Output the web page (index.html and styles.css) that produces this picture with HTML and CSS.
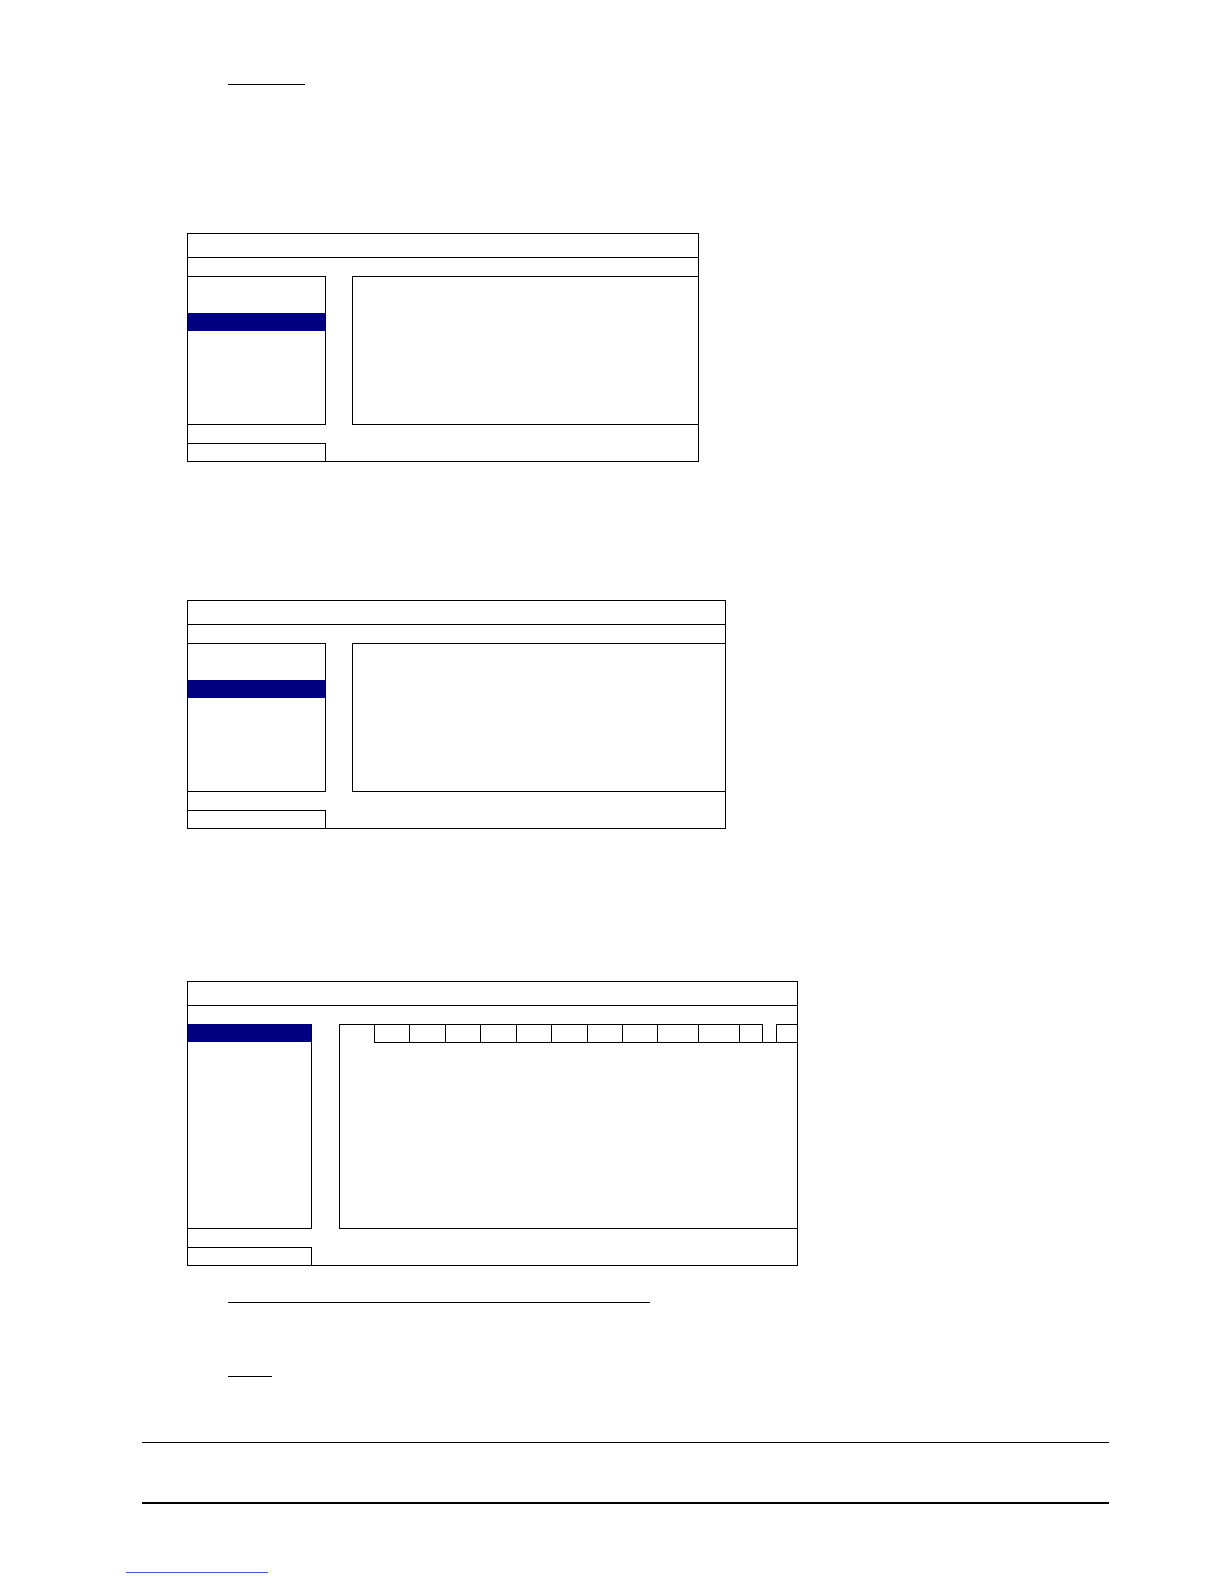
FILE: index.html
```html
<!DOCTYPE html>
<html lang="en">
<head>
<meta charset="utf-8">
<title>Menu layout</title>
<link rel="stylesheet" href="styles.css">
</head>
<body>
<div class="page">
  <div class="rule-short rule-a"></div>

  <div class="osd osd-1">
    <div class="osd-title"></div>
    <div class="osd-body">
      <div class="menu">
        <div class="menu-item sel sel-mid"></div>
      </div>
      <div class="gap"></div>
      <div class="content"></div>
    </div>
    <div class="osd-foot"><div class="foot-box"></div></div>
  </div>

  <div class="osd osd-2">
    <div class="osd-title"></div>
    <div class="osd-body">
      <div class="menu">
        <div class="menu-item sel sel-mid"></div>
      </div>
      <div class="gap"></div>
      <div class="content"></div>
    </div>
    <div class="osd-foot"><div class="foot-box"></div></div>
  </div>

  <div class="osd osd-3">
    <div class="osd-title"></div>
    <div class="osd-body tall">
      <div class="menu narrow">
        <div class="menu-item sel sel-top"></div>
      </div>
      <div class="gap wide"></div>
      <div class="content tabbed">
        <div class="tabs">
          <div class="tab corner"></div>
          <div class="tab w35"></div>
          <div class="tab w36"></div>
          <div class="tab w35"></div>
          <div class="tab w36"></div>
          <div class="tab w35"></div>
          <div class="tab w36"></div>
          <div class="tab w35"></div>
          <div class="tab w35"></div>
          <div class="tab w41"></div>
          <div class="tab w41"></div>
          <div class="tab w24 closed"></div>
          <div class="tab spacer"></div>
          <div class="tab w21"></div>
        </div>
      </div>
    </div>
    <div class="osd-foot"><div class="foot-box narrow"></div></div>
  </div>

  <div class="rule-short rule-b"></div>
  <div class="rule-short rule-c"></div>
  <div class="rule-full rule-d"></div>
  <div class="rule-full thick rule-e"></div>
  <div class="rule-link"></div>
</div>
</body>
</html>
```

FILE: styles.css
```css
* { box-sizing: border-box; }

html, body {
  margin: 0;
  padding: 0;
  background: #ffffff;
  font-family: "Liberation Serif", "Times New Roman", serif;
}

.page {
  width: 1224px;
  min-height: 1584px;
  display: flex;
  flex-direction: column;
  align-items: flex-start;
}

/* short underlines */
.rule-short {
  height: 1px;
  background: #000;
  margin-left: 228px;
}
.rule-a { margin-top: 84px; width: 77px; }
.rule-b { margin-top: 36px; width: 422px; }
.rule-c { margin-top: 73px; width: 44px; }

/* full-width rules */
.rule-full {
  margin-left: 142px;
  width: 967px;
  height: 1px;
  background: #000;
}
.rule-d { margin-top: 65px; }
.rule-e { margin-top: 59px; height: 2px; }

.rule-link {
  margin-top: 68px;
  margin-left: 126px;
  width: 142px;
  height: 1px;
  background: #3a5bd9;
}

/* OSD menu boxes */
.osd {
  margin-left: 187px;
  border: 1px solid #000;
  display: flex;
  flex-direction: column;
}
.osd-1 { margin-top: 148px; width: 512px; }
.osd-2 { margin-top: 138px; width: 539px; }
.osd-3 { margin-top: 152px; width: 611px; }

.osd-title {
  height: 24px;
  border-bottom: 1px solid #000;
  margin-bottom: 18px;
}

.osd-body {
  display: flex;
  height: 149px;
}
.osd-body.tall { height: 205px; }

.menu {
  width: 138px;
  border-top: 1px solid #000;
  border-right: 1px solid #000;
  border-bottom: 1px solid #000;
  display: flex;
  flex-direction: column;
}
.menu.narrow { width: 124px; }

.menu-item { height: 18px; }
.sel { background: #000080; }
.sel-mid { margin-top: 36px; }
.sel-top { margin-top: -1px; height: 18px; }

.gap { width: 26px; }
.gap.wide { width: 27px; }

.content {
  flex: 1;
  border-top: 1px solid #000;
  border-left: 1px solid #000;
  border-bottom: 1px solid #000;
}
.content.tabbed { border-top: none; }

.tabs {
  display: flex;
  height: 19px;
}
.tab {
  height: 19px;
  border-top: 1px solid #000;
  border-left: 1px solid #000;
  border-bottom: 1px solid #000;
}
.tab.corner {
  width: 34px;
  border-left: none;
  border-bottom: none;
}
.tab.spacer {
  width: 13px;
  border-top: none;
  border-left: none;
}
.tab.closed { border-right: 1px solid #000; }
.w35 { width: 35px; }
.w36 { width: 36px; }
.w41 { width: 41px; }
.w24 { width: 24px; }
.w21 { width: 21px; }

.osd-foot {
  margin-top: 18px;
  height: 18px;
  display: flex;
}
.foot-box {
  width: 138px;
  height: 18px;
  border-top: 1px solid #000;
  border-right: 1px solid #000;
}
.foot-box.narrow { width: 124px; }
```
